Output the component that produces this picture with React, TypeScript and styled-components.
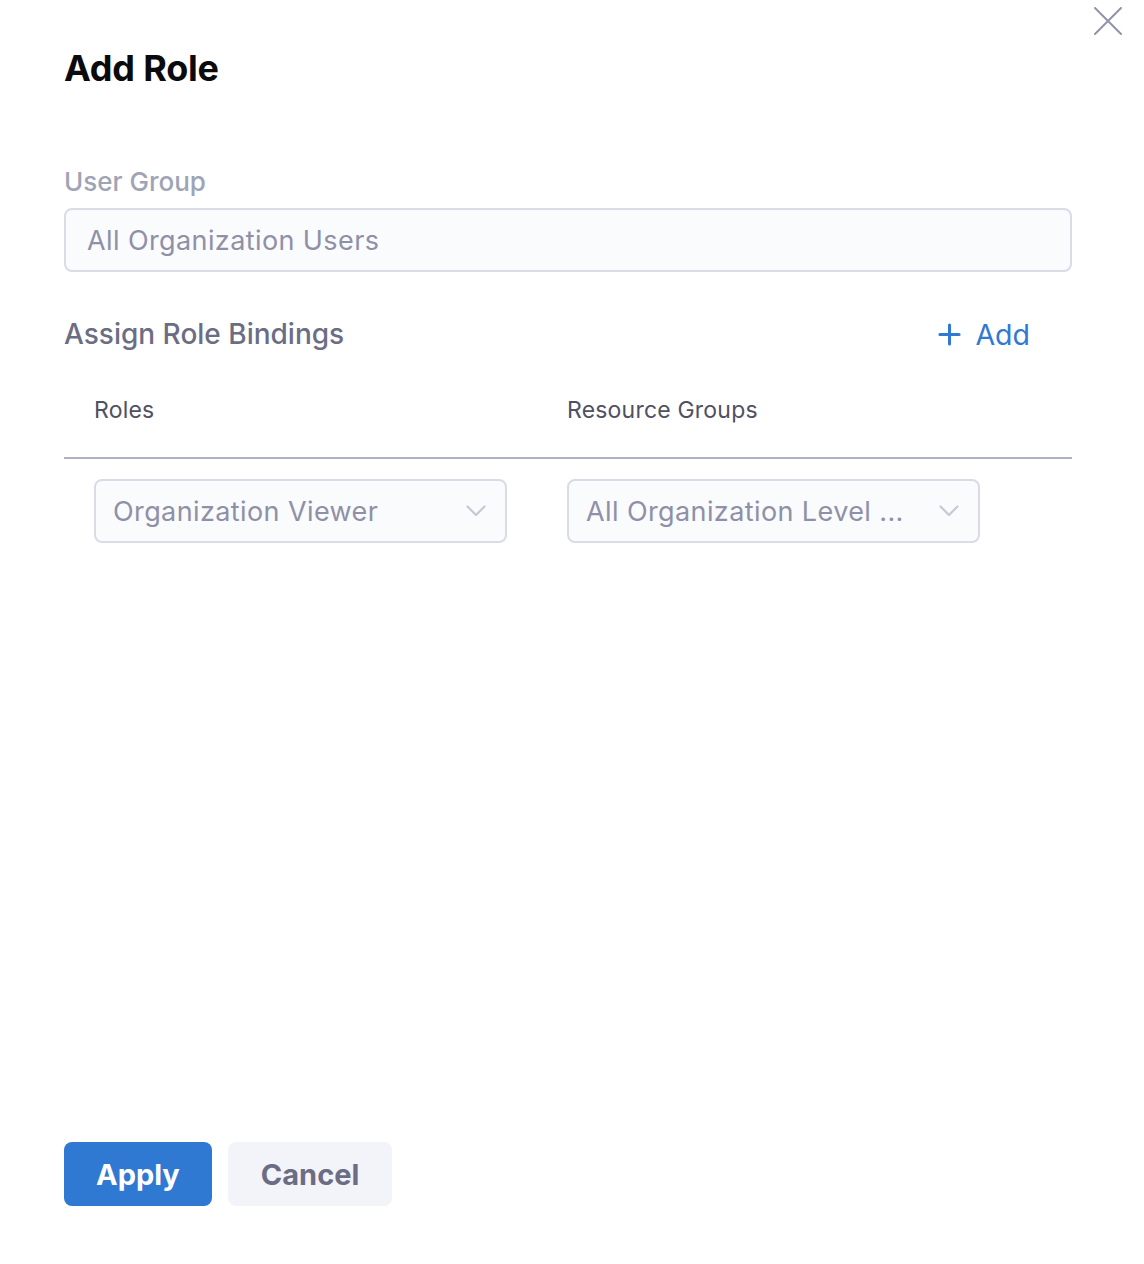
import React from "react";
import styled, { createGlobalStyle } from "styled-components";

const Global = createGlobalStyle`
  html, body { margin: 0; padding: 0; background: #ffffff; }
  body { font-family: Inter, "Noto Sans", sans-serif; -webkit-font-smoothing: antialiased; }
  * { box-sizing: border-box; }
`;

const Dialog = styled.div`
  position: relative;
  width: 1144px;
  height: 1264px;
  padding: 44px 72px 58px 64px;
  display: flex;
  flex-direction: column;
  background: #ffffff;
`;

const CloseButton = styled.button`
  position: absolute;
  top: 6px;
  right: 21px;
  width: 30px;
  height: 30px;
  padding: 0;
  border: none;
  background: transparent;
  display: flex;
  align-items: center;
  justify-content: center;
  cursor: pointer;
`;

const Title = styled.h1`
  margin: 0;
  font-size: 36px;
  line-height: 48px;
  font-weight: 700;
  color: #0b0b0d;
  letter-spacing: -0.2px;
`;

const FieldLabel = styled.label`
  margin-top: 74px;
  font-size: 26px;
  line-height: 32px;
  font-weight: 500;
  color: #9ea4b5;
`;

const ReadonlyInput = styled.div`
  margin-top: 10px;
  height: 64px;
  border: 2px solid #dadbe6;
  border-radius: 8px;
  background: #fafbfc;
  display: flex;
  align-items: center;
  padding: 0 21px;
  font-size: 27px;
  letter-spacing: 0.4px;
  color: #8f90a8;
`;

const SectionHeader = styled.div`
  margin-top: 44px;
  display: flex;
  align-items: center;
  justify-content: space-between;
  padding-right: 42px;
`;

const SectionTitle = styled.h2`
  margin: 0;
  font-size: 28px;
  line-height: 36px;
  font-weight: 500;
  color: #6b6d85;
`;

const AddButton = styled.button`
  display: flex;
  align-items: center;
  gap: 14px;
  padding: 0;
  border: none;
  background: transparent;
  font-family: inherit;
  font-size: 28.5px;
  color: #3079d2;
  cursor: pointer;
`;

const Table = styled.div`
  margin-top: 42px;
  display: flex;
  flex-direction: column;
`;

const TableRow = styled.div<{ $header?: boolean }>`
  display: grid;
  grid-template-columns: 473px 1fr;
  padding-left: 30px;
  align-items: center;
  ${(p) =>
    p.$header
      ? `height: 65px; align-items: flex-start; padding-top: 1px; border-bottom: 2px solid #b0b1c3;`
      : `padding-top: 20px;`}
`;

const ColumnHeading = styled.div`
  font-size: 23px;
  line-height: 30px;
  letter-spacing: 0.2px;
  color: #4f5163;
`;

const Select = styled.div`
  width: 413px;
  height: 64px;
  border: 2px solid #dadbe6;
  border-radius: 8px;
  background: #fafbfc;
  display: flex;
  align-items: center;
  justify-content: space-between;
  padding: 0 19px 0 17px;
  font-size: 27px;
  letter-spacing: 0.4px;
  color: #8f90a8;
`;

const SelectText = styled.span`
  white-space: nowrap;
  overflow: hidden;
`;

const Spacer = styled.div`
  flex: 1;
`;

const Footer = styled.div`
  display: flex;
  gap: 16px;
`;

const Button = styled.button<{ $primary?: boolean }>`
  height: 64px;
  border: none;
  border-radius: 8px;
  padding: 0 ${(p) => (p.$primary ? 32 : 33)}px;
  font-family: inherit;
  font-size: 29px;
  font-weight: 700;
  cursor: pointer;
  background: ${(p) => (p.$primary ? "#3079d2" : "#f3f3fa")};
  color: ${(p) => (p.$primary ? "#ffffff" : "#6b6d85")};
`;

const Chevron = () => (
  <svg width="20" height="12" viewBox="0 0 20 12" fill="none">
    <path d="M1.5 1.5L10 10L18.5 1.5" stroke="#c6c8d4" strokeWidth="2.2" strokeLinecap="round" strokeLinejoin="round" />
  </svg>
);

export default function App() {
  return (
    <>
      <Global />
      <Dialog>
        <CloseButton aria-label="Close">
          <svg width="28" height="28" viewBox="0 0 28 28" fill="none">
            <path d="M1 1L27 27M27 1L1 27" stroke="#9293ab" strokeWidth="2" strokeLinecap="round" />
          </svg>
        </CloseButton>
        <Title>Add Role</Title>
        <FieldLabel>User Group</FieldLabel>
        <ReadonlyInput>All Organization Users</ReadonlyInput>
        <SectionHeader>
          <SectionTitle>Assign Role Bindings</SectionTitle>
          <AddButton>
            <svg width="23" height="23" viewBox="0 0 24 24" fill="none">
              <path d="M12 2V22M2 12H22" stroke="#3079d2" strokeWidth="3.2" strokeLinecap="round" />
            </svg>
            Add
          </AddButton>
        </SectionHeader>
        <Table>
          <TableRow $header>
            <ColumnHeading>Roles</ColumnHeading>
            <ColumnHeading>Resource Groups</ColumnHeading>
          </TableRow>
          <TableRow>
            <Select>
              <SelectText>Organization Viewer</SelectText>
              <Chevron />
            </Select>
            <Select>
              <SelectText>All Organization Level ...</SelectText>
              <Chevron />
            </Select>
          </TableRow>
        </Table>
        <Spacer />
        <Footer>
          <Button $primary>Apply</Button>
          <Button>Cancel</Button>
        </Footer>
      </Dialog>
    </>
  );
}
